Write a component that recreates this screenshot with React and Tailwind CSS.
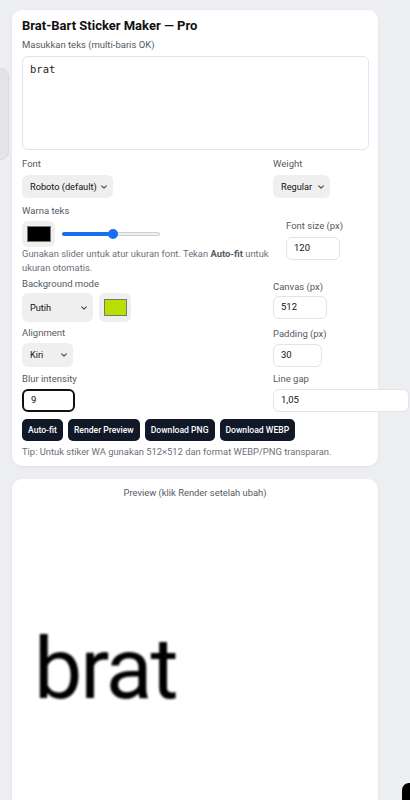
import React from "react";

const Chevron = () => (
  <svg width="8" height="8" viewBox="0 0 10 10" className="shrink-0">
    <path d="M2 3.5 L5 6.5 L8 3.5" fill="none" stroke="#444" strokeWidth="1.3" strokeLinecap="round" strokeLinejoin="round" />
  </svg>
);

const Select = ({ label, w, h = "h-[23px]" }) => (
  <div className={`flex items-center justify-between rounded-[6px] bg-[#efefef] pl-[8px] pr-[5px] text-[9.2px] text-[#111] ${w} ${h}`}>
    <span>{label}</span>
    <Chevron />
  </div>
);

const Input = ({ value, w, cls = "border border-[#e3e4e7]" }) => (
  <div className={`flex h-[23px] items-center rounded-[6px] bg-white px-[7px] text-[9.5px] text-[#111] ${cls} ${w}`}>
    {value}
  </div>
);

const Label = ({ children, cls = "" }) => (
  <div className={`text-[9.5px] leading-[14px] text-[#555a62] ${cls}`}>{children}</div>
);

const Btn = ({ children }) => (
  <div className="flex h-[22px] items-center rounded-[5px] bg-[#111827] px-[6px] text-[8.6px] font-medium text-white">
    {children}
  </div>
);

export default function App() {
  return (
    <div
      className="relative min-h-[800px] overflow-hidden bg-[#eceef1] pt-[10px]"
      style={{ fontFamily: "Roboto, 'Liberation Sans', sans-serif" }}
    >
      <div className="absolute left-[-20px] top-[68px] h-[92px] w-[29px] rounded-[8px] border border-[#d9dadd] bg-[#e3e4e7]" />

      <div className="relative ml-[12px] w-[366px] rounded-[10px] bg-white px-[10px] pb-[7px] pt-[6px] shadow-[0_1px_3px_rgba(0,0,0,0.06)]">
        <div className="text-[13px] font-bold leading-[20px] text-[#111]">Brat-Bart Sticker Maker — Pro</div>
        <Label cls="mt-[2px]">Masukkan teks (multi-baris OK)</Label>
        <div
          className="mt-[4px] h-[94px] w-[347px] rounded-[6px] border border-[#e3e4e7] px-[7px] pt-[5px] text-[10.5px] leading-[14px] text-[#222]"
          style={{ fontFamily: "'DejaVu Sans Mono', monospace" }}
        >
          brat
        </div>

        {/* Row Font / Weight */}
        <div className="mt-[7px] flex">
          <div className="flex-1">
            <Label>Font</Label>
            <div className="mt-[4px]">
              <Select label="Roboto (default)" w="w-[91px]" />
            </div>
          </div>
          <div className="w-[95px]">
            <Label>Weight</Label>
            <div className="mt-[4px]">
              <Select label="Regular" w="w-[57px]" />
            </div>
          </div>
        </div>

        {/* Row Warna */}
        <div className="mt-[6px] flex items-center">
          <div className="flex-1">
            <Label>Warna teks</Label>
            <div className="mt-[3px] flex items-center gap-[7px]">
              <div className="flex h-[26px] w-[33px] items-center justify-center rounded-[6px] bg-[#efefef]">
                <div className="h-[16px] w-[24px] border border-[#777] bg-black" />
              </div>
              <div className="relative h-[10px] w-[98px]">
                <div className="absolute left-0 right-0 top-[3px] h-[4px] rounded-full border border-[#cfcfcf] bg-[#efefef]" />
                <div className="absolute left-0 top-[3px] h-[4px] w-[52px] rounded-full bg-[#1a6ff0]" />
                <div className="absolute left-[46px] top-0 h-[10px] w-[10px] rounded-full bg-[#1a6ff0]" />
              </div>
            </div>
            <p className="w-[250px] text-[9.4px] leading-[14px] text-[#6b7079]">
              Gunakan slider untuk atur ukuran font. Tekan <strong className="font-bold text-[#555a62]">Auto-fit</strong> untuk ukuran otomatis.
            </p>
          </div>
          <div className="w-[82px]">
            <Label>Font size (px)</Label>
            <div className="mt-[4px]">
              <Input value="120" w="w-[54px]" />
            </div>
          </div>
        </div>

        {/* Row Background */}
        <div className="mt-[2px] flex items-center">
          <div className="flex-1">
            <Label>Background mode</Label>
            <div className="mt-[2px] flex gap-[6px]">
              <Select label="Putih" w="w-[71px]" h="h-[29px]" />
              <div className="flex h-[29px] w-[32px] items-center justify-center rounded-[6px] bg-[#efefef]">
                <div className="h-[17px] w-[23px] border border-[#777] bg-[#b8e000]" />
              </div>
            </div>
          </div>
          <div className="w-[95px]">
            <Label>Canvas (px)</Label>
            <div className="mt-[2px]">
              <Input value="512" w="w-[54px]" />
            </div>
          </div>
        </div>

        {/* Row Alignment */}
        <div className="mt-[4px] flex items-center">
          <div className="flex-1">
            <Label>Alignment</Label>
            <div className="mt-[3px]">
              <Select label="Kiri" w="w-[51px]" h="h-[24px]" />
            </div>
          </div>
          <div className="w-[95px]">
            <Label>Padding (px)</Label>
            <div className="mt-[3px]">
              <Input value="30" w="w-[49px]" />
            </div>
          </div>
        </div>

        {/* Row Blur */}
        <div className="mt-[5px] flex items-center">
          <div className="flex-1">
            <Label>Blur intensity</Label>
            <div className="mt-[3px]">
              <Input value="9" w="w-[53px]" cls="border-2 border-[#111] rounded-[6px]" />
            </div>
          </div>
          <div className="w-[95px]">
            <Label>Line gap</Label>
            <div className="mt-[3px]">
              <Input value="1,05" w="w-[136px]" />
            </div>
          </div>
        </div>

        <div className="mt-[7px] flex gap-[5px]">
          <Btn>Auto-fit</Btn>
          <Btn>Render Preview</Btn>
          <Btn>Download PNG</Btn>
          <Btn>Download WEBP</Btn>
        </div>

        <div className="mt-[4px] text-[9.4px] leading-[14px] text-[#6b7079]">
          Tip: Untuk stiker WA gunakan 512×512 dan format WEBP/PNG transparan.
        </div>
      </div>

      <div className="ml-[12px] mt-[13px] h-[340px] w-[366px] rounded-t-[10px] bg-white pt-[7px] shadow-[0_1px_3px_rgba(0,0,0,0.06)]">
        <div className="text-center text-[9.4px] leading-[14px] text-[#555a62]">Preview (klik Render setelah ubah)</div>
        <div
          className="ml-[22px] mt-[126px] text-[86px] leading-[86px] tracking-[-2px] text-black blur-[0.8px]"
          style={{ fontFamily: "Roboto, sans-serif" }}
        >
          brat
        </div>
      </div>

      <div className="absolute left-[402px] top-[783px] h-[24px] w-[14px] rounded-full bg-black" />
    </div>
  );
}
